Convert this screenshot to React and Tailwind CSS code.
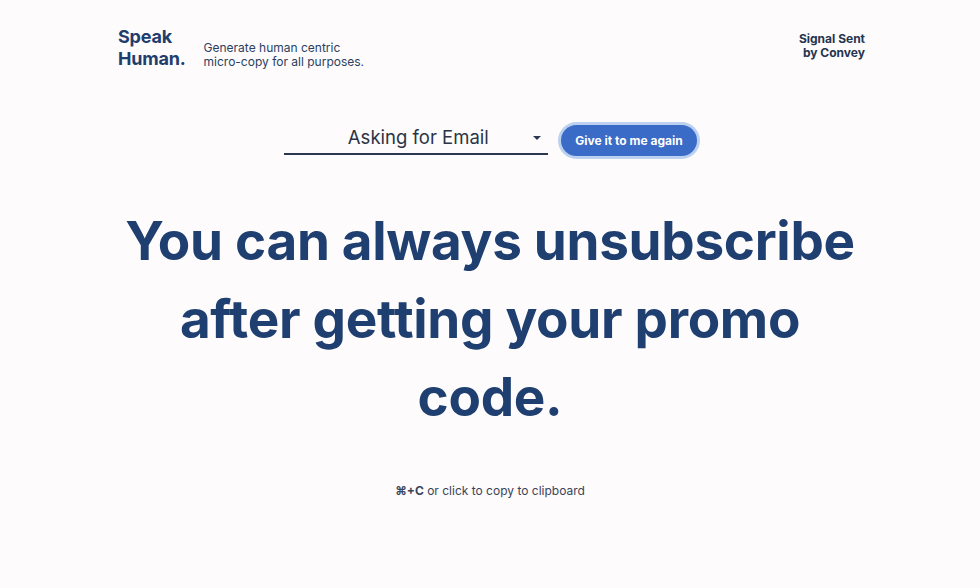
import React from 'react';

const App = () => {
  return (
    <div className="w-[980px] h-[588px] bg-[#fdfbfc] text-[#1f3d6d] relative overflow-hidden" style={{ fontFamily: 'Inter, "Noto Sans", sans-serif' }}>
      {/* header */}
      <div className="flex justify-between items-start px-[118px] pt-[26px]">
        <div className="flex items-end gap-[18px]">
          <div className="text-[18px] leading-[22px] font-bold tracking-[-0.2px]">
            Speak<br />Human.
          </div>
          <div className="text-[12px] leading-[14px] text-[#2b3f5e] pb-[1px]">
            Generate human centric<br />micro-copy for all purposes.
          </div>
        </div>
        <div className="text-[12px] leading-[14px] font-bold text-right text-[#25344f] pt-[6px] -mr-[3px]">
          Signal Sent<br />by Convey
        </div>
      </div>

      {/* controls */}
      <div className="flex justify-center items-center gap-[13px] mt-[51px] ml-[1px]">
        <div className="w-[264px] h-[32px] border-b-[2px] border-[#2b3850] flex items-center relative">
          <span className="flex-1 text-center text-[18.5px] text-[#2a3446] pl-[4px]">Asking for Email</span>
          <span className="absolute right-[7px] top-[13px] w-0 h-0 border-l-[4px] border-r-[4px] border-t-[4px] border-l-transparent border-r-transparent border-t-[#2b3850]" />
        </div>
        <button className="h-[31px] px-[14px] rounded-full bg-[#3a6bc6] text-white text-[12px] font-bold ring-[3px] ring-[#bcd0f0] mt-[4px]">
          Give it to me again
        </button>
      </div>

      {/* headline */}
      <div className="mt-[46px] text-center text-[53px] leading-[78px] font-bold tracking-[-0.3px] text-[#1f3f70]">
        You can always unsubscribe<br />after getting your promo<br />code.
      </div>

      {/* hint */}
      <div className="mt-[46px] text-center text-[12px] text-[#3a4459]">
        <span className="font-bold">⌘+C</span> or click to copy to clipboard
      </div>
    </div>
  );
};

export default App;
